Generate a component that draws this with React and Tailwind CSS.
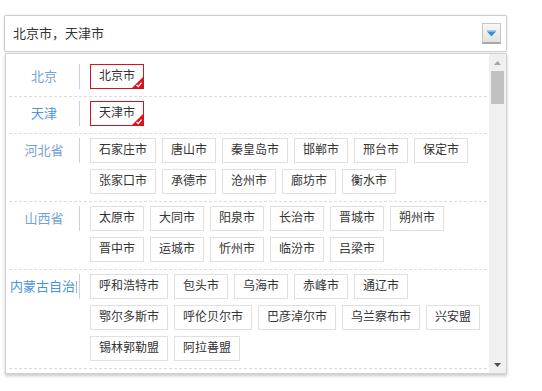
import React from "react";

const rows = [
  { label: "北京", selected: true, cities: ["北京市"] },
  { label: "天津", selected: true, active: true, cities: ["天津市"] },
  {
    label: "河北省",
    cities: ["石家庄市", "唐山市", "秦皇岛市", "邯郸市", "邢台市", "保定市", "张家口市", "承德市", "沧州市", "廊坊市", "衡水市"],
  },
  {
    label: "山西省",
    cities: ["太原市", "大同市", "阳泉市", "长治市", "晋城市", "朔州市", "晋中市", "运城市", "忻州市", "临汾市", "吕梁市"],
  },
  {
    label: "内蒙古自治区",
    long: true,
    active: true,
    cities: ["呼和浩特市", "包头市", "乌海市", "赤峰市", "通辽市", "鄂尔多斯市", "呼伦贝尔市", "巴彦淖尔市", "乌兰察布市", "兴安盟", "锡林郭勒盟", "阿拉善盟"],
  },
  {
    label: "辽宁省",
    cities: ["沈阳市", "大连市", "鞍山市", "抚顺市", "本溪市", "丹东市", "锦州市", "营口市", "阜新市", "辽阳市", "盘锦市", "铁岭市", "朝阳市", "葫芦岛市"],
  },
];

function Chip({ name, selected }) {
  if (selected) {
    return (
      <div className="relative h-[25px] px-[8px] border border-[#d9121c] text-[12px] leading-[23px] text-[#333] bg-white">
        {name}
        <svg className="absolute right-0 bottom-0" width="11" height="11" viewBox="0 0 11 11">
          <polygon points="11,0 11,11 0,11" fill="#d9121c" />
          <path d="M4.5 8 L6.3 9.6 L9.5 5.6" stroke="#fff" strokeWidth="1.4" fill="none" />
        </svg>
      </div>
    );
  }
  return (
    <div className="h-[25px] px-[8px] border border-[#e0e0e0] text-[12px] leading-[23px] text-[#333] bg-white whitespace-nowrap">
      {name}
    </div>
  );
}

export default function App() {
  return (
    <div className="min-h-[391px] bg-white pt-[15px] pl-[4px] font-['Liberation_Sans','Noto_Sans_CJK_SC',sans-serif]">
      <div className="w-[503px] h-[37px] border border-[#cfcfcf] rounded-[2px] shadow-[0_0_2px_rgba(0,0,0,0.18)] bg-white flex items-center justify-between pl-[8px] pr-[5px]">
        <span className="text-[13px] text-[#333]">北京市，天津市</span>
        <div className="w-[19px] h-[21px] border border-[#c6c6c6] border-b-2 border-b-[#a8a8a8] bg-[linear-gradient(#f7f7f7,#e2e2e2)] flex items-center justify-center">
          <svg width="9" height="7" viewBox="0 0 9 7">
            <rect x="0" y="0" width="9" height="1.5" fill="#9fcdf0" />
            <polygon points="0,1.5 9,1.5 4.5,6.5" fill="#3b8fd6" />
          </svg>
        </div>
      </div>

      <div className="mt-[1px] ml-[1px] w-[502px] h-[321px] border border-[#d2d2d2] bg-white shadow-[0_2px_3px_rgba(0,0,0,0.22)] flex overflow-hidden">
        <div className="flex-1 overflow-hidden pt-[6px] pl-[3px] pr-[2px]">
          {rows.map((row) => (
            <div key={row.label} className="flex items-start pt-[4px] pb-[7px] border-b border-dashed border-[#dcdcdc]">
              <div
                className={
                  "w-[71px] h-[25px] shrink-0 border-r border-[#c3d3e3] text-center text-[13px] leading-[25px] whitespace-nowrap overflow-hidden " +
                  (row.active ? "text-[#4d94da]" : "text-[#72a3d6]")
                }
              >
                {row.long ? (
                  <span className="block w-[67px] ml-[1px] overflow-hidden whitespace-nowrap text-left">
                    {row.label}
                  </span>
                ) : (
                  row.label
                )}
              </div>
              <div className="ml-[10px] flex-1 flex flex-wrap gap-[6px]">
                {row.cities.map((c) => (
                  <Chip key={c} name={c} selected={row.selected} />
                ))}
              </div>
            </div>
          ))}
        </div>
        <div className="w-[17px] shrink-0 bg-[#f0f0f0] flex flex-col items-center">
          <div className="h-[17px] w-full flex items-center justify-center">
            <svg width="7" height="4" viewBox="0 0 7 4">
              <polygon points="0,4 7,4 3.5,0" fill="#a3a3a3" />
            </svg>
          </div>
          <div className="w-[13px] h-[33px] bg-[#c1c1c1]" />
          <div className="flex-1" />
          <div className="h-[17px] w-full flex items-center justify-center">
            <svg width="7" height="4" viewBox="0 0 7 4">
              <polygon points="0,0 7,0 3.5,4" fill="#505050" />
            </svg>
          </div>
        </div>
      </div>
    </div>
  );
}
